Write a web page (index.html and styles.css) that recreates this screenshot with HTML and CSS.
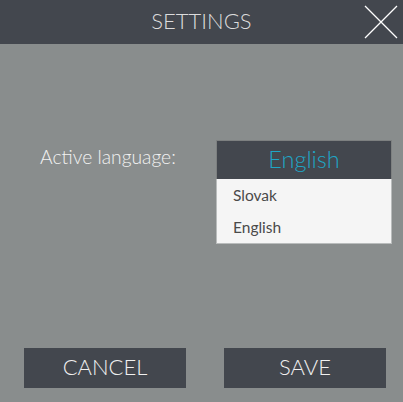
FILE: index.html
```html
<!DOCTYPE html>
<html>
<head>
<meta charset="utf-8">
<link rel="stylesheet" href="styles.css">
</head>
<body>
<div class="app">
  <header class="header">
    <h1 class="title">SETTINGS</h1>
    <button class="close" aria-label="Close">
      <svg width="34" height="34" viewBox="0 0 34 34"><path d="M1 1L33 33M33 1L1 33" stroke="#fff" stroke-width="1.3" fill="none"/></svg>
    </button>
  </header>
  <main class="content">
    <div class="row">
      <span class="label">Active language:</span>
      <div class="dropdown">
        <div class="selected">English</div>
        <ul class="options">
          <li>Slovak</li>
          <li>English</li>
        </ul>
      </div>
    </div>
  </main>
  <footer class="footer">
    <button class="btn">CANCEL</button>
    <button class="btn">SAVE</button>
  </footer>
</div>
</body>
</html>
```
FILE: styles.css
```css
html, body { margin: 0; padding: 0; }
body {
  background: #898d8d;
  font-family: "Lato", "Open Sans", sans-serif;
  color: #f0f0f0;
}
.app {
  width: 403px;
  height: 402px;
  display: flex;
  flex-direction: column;
}
.header {
  height: 44px;
  background: #43474e;
  display: flex;
  align-items: center;
  justify-content: center;
  position: relative;
  padding-bottom: 3px;
  box-sizing: border-box;
}
.title {
  margin: 0;
  font-size: 22px;
  font-weight: 300;
  color: #dcdcdc;
}
.close {
  position: absolute;
  right: 5px;
  top: 5px;
  padding: 0;
  border: 0;
  background: none;
  width: 34px;
  height: 34px;
  display: block;
}
.close svg { display: block; }
.content {
  flex: 1;
  padding: 96px 11px 0 40px;
}
.row {
  display: flex;
  align-items: flex-start;
}
.label {
  margin-top: 5px;
  font-size: 19.3px;
  font-weight: 300;
  color: #f2f2f2;
}
.dropdown {
  margin-left: auto;
  width: 176px;
}
.selected {
  height: 39px;
  background: #43474e;
  color: #1fa6c6;
  font-size: 23.5px;
  font-weight: 300;
  display: flex;
  align-items: center;
  justify-content: center;
  border: 1px solid #7d8080;
  border-bottom: 0;
  box-sizing: border-box;
  padding-bottom: 3px;
}
.options {
  list-style: none;
  margin: 0;
  padding: 0;
  background: #f5f5f5;
  border: 1px solid #b9bcbc;
  border-top: 0;
}
.options li {
  height: 32px;
  line-height: 32px;
  padding-left: 16px;
  font-size: 15.5px;
  color: #4a4a4a;
}
.footer {
  display: flex;
  gap: 38px;
  padding: 0 17px 14px 24px;
}
.btn {
  width: 162px;
  height: 40px;
  border: 0;
  background: #43474e;
  color: #f0f0f0;
  font-family: inherit;
  font-size: 22px;
  font-weight: 300;
  padding: 0 0 4px;
}
```
